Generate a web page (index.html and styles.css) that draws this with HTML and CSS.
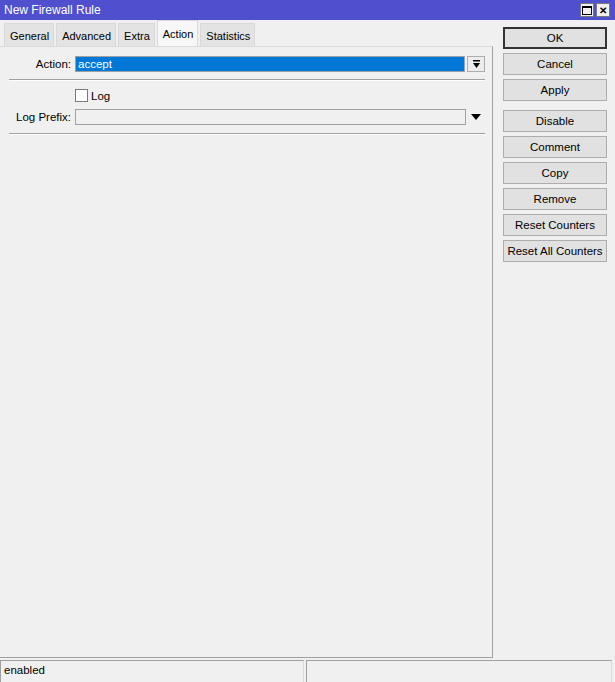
FILE: index.html
```html
<!doctype html>
<html lang="en">
<head>
    <meta charset="UTF-8">
    <title>New Firewall Rule</title>
    <link rel="stylesheet" href="styles.css">
</head>
<body>
<div class="window">
    <div class="titlebar">
        <span>New Firewall Rule</span>
        <div class="title-buttons">
            <span class="tb-btn"><span class="tb-max"></span></span>
            <span class="tb-btn tb-close">&#x2715;</span>
        </div>
    </div>

    <div class="main">
        <div class="left">
            <div class="tabs">
                <div class="tab">General</div>
                <div class="tab">Advanced</div>
                <div class="tab">Extra</div>
                <div class="tab active">Action</div>
                <div class="tab">Statistics</div>
            </div>

            <div class="panel">
                <div class="row">
                    <label class="row-label">Action:</label>
                    <div class="field selected">accept</div>
                    <span class="drop-btn">
                        <svg width="9" height="9" viewBox="0 0 9 9">
                            <rect x="1" y="0" width="7" height="1.5" fill="#000"/>
                            <polygon points="1,3 8,3 4.5,8" fill="#000"/>
                        </svg>
                    </span>
                </div>
                <div class="sep"></div>

                <div class="row check-row">
                    <span class="row-label"></span>
                    <span class="check"></span>
                    <span class="check-text">Log</span>
                </div>

                <div class="row prefix-row">
                    <label class="row-label">Log Prefix:</label>
                    <div class="field prefix"></div>
                    <span class="drop-arrow">
                        <svg width="10" height="6" viewBox="0 0 10 6">
                            <polygon points="0,0 10,0 5,6" fill="#000"/>
                        </svg>
                    </span>
                </div>
                <div class="sep last"></div>
            </div>
        </div>

        <div class="buttons">
            <button class="default">OK</button>
            <button>Cancel</button>
            <button class="group-end">Apply</button>
            <button>Disable</button>
            <button>Comment</button>
            <button>Copy</button>
            <button>Remove</button>
            <button>Reset Counters</button>
            <button>Reset All Counters</button>
        </div>
    </div>

    <div class="statusbar">
        <div class="status-cell first">enabled</div>
        <div class="status-cell second"></div>
    </div>
</div>
</body>
</html>
```

FILE: styles.css
```css
* {
    box-sizing: border-box;
}

body {
    margin: 0;
    background: #f0f0f0;
    font-family: "Liberation Sans", Arial, sans-serif;
    font-size: 11px;
    color: #000;
}

.window {
    width: 615px;
    height: 682px;
    display: flex;
    flex-direction: column;
    background: #f0f0f0;
}

.titlebar {
    height: 20px;
    background: #5050cf;
    color: #fff;
    font-size: 12px;
    padding: 0 4px;
    display: flex;
    align-items: center;
    justify-content: space-between;
}

.title-buttons {
    display: flex;
    gap: 2px;
    margin-right: 1px;
}

.tb-btn {
    width: 14px;
    height: 14px;
    background: #f0f0f0;
    border: 1px solid #7a7a7a;
    display: flex;
    align-items: center;
    justify-content: center;
    color: #000;
    font-size: 10px;
    font-weight: bold;
}

.tb-max {
    width: 10px;
    height: 9px;
    border: 1px solid #000;
    border-top-width: 2px;
}

.main {
    flex: 1;
    display: flex;
}

.left {
    width: 493px;
    display: flex;
    flex-direction: column;
}

.tabs {
    height: 26px;
    display: flex;
    align-items: flex-end;
    padding-left: 4px;
    gap: 2px;
}

.tab {
    height: 23px;
    padding: 2px 4px 0 5px;
    background: #e3e3e3;
    border: 1px solid #d9d9d9;
    border-bottom: none;
    display: flex;
    align-items: center;
}

.tab.active {
    height: 26px;
    background: #f7f7f7;
    padding-top: 1px;
}

.panel {
    flex: 1;
    border-top: 1px solid #dadada;
    border-right: 1px solid #a0a0a0;
    border-bottom: 1px solid #a0a0a0;
    padding: 9px 7px 0 9px;
}

.row {
    display: flex;
    align-items: center;
    height: 16px;
    font-size: 11.5px;
}

.row-label {
    width: 62px;
    text-align: right;
    margin-right: 4px;
    flex: none;
}

.field {
    width: 391px;
    height: 16px;
    border: 1px solid #a0a0a0;
    background: #f0f0f0;
    padding-left: 2px;
    line-height: 14px;
}

.field.selected {
    background: #0078d7;
    color: #fff;
}

.field.prefix {
    width: 392px;
}

.drop-btn {
    width: 18px;
    height: 16px;
    margin-left: 2px;
    border: 1px solid #adadad;
    background: #ececec;
    display: flex;
    align-items: center;
    justify-content: center;
}

.drop-arrow {
    width: 18px;
    display: flex;
    justify-content: center;
    margin-left: 1px;
}

.sep {
    height: 2px;
    border-top: 1px solid #a0a0a0;
    border-bottom: 1px solid #fff;
    margin: 7px 0 8px 0;
}

.sep.last {
    margin-top: 8px;
}

.check-row {
    height: 13px;
}

.check {
    width: 13px;
    height: 13px;
    border: 1px solid #7a7a7a;
    background: #fff;
    margin-right: 3px;
}

.prefix-row {
    margin-top: 7px;
}

.buttons {
    flex: 1;
    display: flex;
    flex-direction: column;
    padding: 7px 0 0 10px;
    gap: 4px;
}

.buttons button {
    width: 104px;
    height: 22px;
    background: #e1e1e1;
    border: 1px solid #adadad;
    font-family: inherit;
    font-size: 11.5px;
    color: #000;
    padding: 0;
}

.buttons button.default {
    border: 2px solid #333;
}

.buttons button.group-end {
    margin-bottom: 5px;
}

.statusbar {
    height: 24px;
    display: flex;
    padding-top: 2px;
}

.status-cell {
    height: 22px;
    border-top: 1px solid #a0a0a0;
    border-left: 1px solid #a0a0a0;
    border-right: 1px solid #d9d9d9;
    padding-left: 3px;
    line-height: 19px;
    font-size: 11.5px;
}

.status-cell.first {
    width: 304px;
}

.status-cell.second {
    width: 306px;
    margin-left: 2px;
}
```
